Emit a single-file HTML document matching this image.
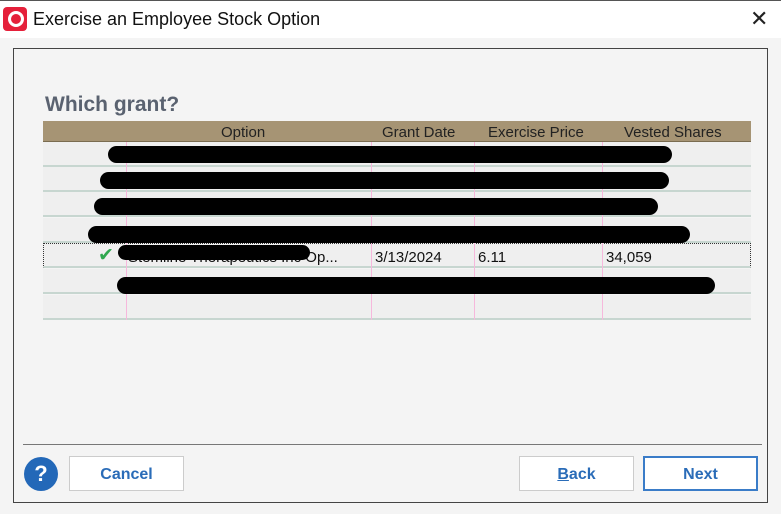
<!DOCTYPE html>
<html><head><style>
body{margin:0;width:781px;height:514px;background:#f4f4f4;font-family:"Liberation Sans",sans-serif;position:relative;overflow:hidden}
.a{position:absolute}
.bar{position:absolute;background:#000;border-radius:9px;height:17px}
.row{position:absolute;left:43px;width:708px;height:25px;background:#efefef;border-bottom:2px solid #c7d6d0;box-sizing:border-box}
.vl{position:absolute;top:142px;height:178px;width:1px;background:#f6b8dc}
.btn{position:absolute;top:456px;height:35px;width:115px;background:#fff;border:1px solid #ccc;box-sizing:border-box;color:#2a6cb8;font-size:16px;font-weight:bold;text-align:center;line-height:35px}
.cell{position:absolute;top:249px;font-size:15px;color:#111}
</style></head><body>
<div class="a" style="left:0;top:0;width:781px;height:38px;background:#fff"></div>
<div class="a" style="left:0;top:0;width:781px;height:1px;background:#555"></div>
<div class="a" style="left:3px;top:7px;width:24px;height:24px;background:#e5203a;border-radius:4px"></div>
<div class="a" style="left:8px;top:11px;width:10px;height:10px;border:3px solid #fff;border-radius:50%"></div>
<div class="a" style="left:33px;top:9px;font-size:18px;color:#111">Exercise an Employee Stock Option</div>
<div class="a" style="left:750px;top:6px;font-size:22px;color:#222">✕</div>
<div class="a" style="left:13px;top:48px;width:755px;height:455px;border:1px solid #444;box-sizing:border-box"></div>
<div class="a" style="left:45px;top:93px;font-size:21px;font-weight:bold;color:#5a6270">Which grant?</div>
<div class="a" style="left:43px;top:121px;width:708px;height:21px;background:#a69474;border-bottom:1px solid #7a6c50;box-sizing:border-box;font-size:15px;color:#222">
<span class="a" style="left:178px;top:3px">Option</span><span class="a" style="left:339px;top:3px">Grant Date</span><span class="a" style="left:445px;top:3px">Exercise Price</span><span class="a" style="left:581px;top:3px">Vested Shares</span></div>
<div class="row" style="top:142px"></div>
<div class="row" style="top:167px"></div>
<div class="row" style="top:192px"></div>
<div class="row" style="top:218px"></div>
<div class="row" style="top:243px;border:1px dotted #333;border-bottom:2px solid #c7d6d0"></div>
<div class="row" style="top:269px"></div>
<div class="row" style="top:295px"></div>
<div class="vl" style="left:126px"></div><div class="vl" style="left:371px"></div><div class="vl" style="left:474px"></div><div class="vl" style="left:602px"></div>
<div class="bar" style="left:108px;top:146px;width:564px"></div>
<div class="bar" style="left:100px;top:172px;width:569px"></div>
<div class="bar" style="left:94px;top:198px;width:564px"></div>
<div class="bar" style="left:88px;top:226px;width:602px"></div>
<div class="a" style="left:98px;top:244px;font-size:19px;color:#2fa84f">✔</div>
<div class="cell" style="left:128px">Stemline Therapeutics Inc Op...</div>
<div class="bar" style="left:118px;top:245px;width:192px;height:15px"></div>
<div class="cell" style="left:375px">3/13/2024</div>
<div class="cell" style="left:478px">6.11</div>
<div class="cell" style="left:606px">34,059</div>
<div class="bar" style="left:117px;top:277px;width:598px"></div>
<div class="a" style="left:23px;top:444px;width:739px;height:1px;background:#777"></div>
<div class="a" style="left:24px;top:457px;width:34px;height:34px;border-radius:50%;background:#2368b8;color:#fff;font-size:22px;font-weight:bold;text-align:center;line-height:34px">?</div>
<div class="btn" style="left:69px">Cancel</div>
<div class="btn" style="left:519px"><u>B</u>ack</div>
<div class="btn" style="left:643px;border:2px solid #3a7cc8;line-height:33px">Next</div>
</body></html>
